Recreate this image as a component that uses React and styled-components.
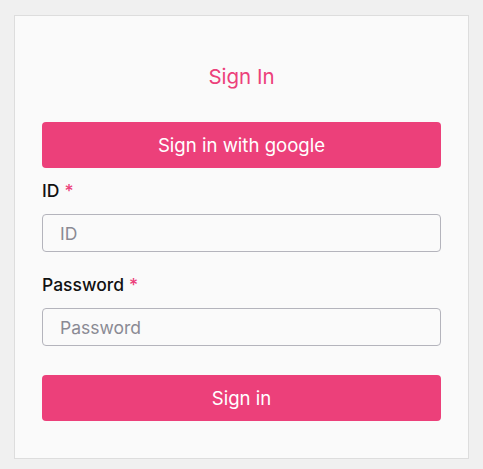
import styled, { createGlobalStyle } from "styled-components";

const GlobalStyle = createGlobalStyle`
  body {
    margin: 0;
    background: #f0f0f0;
    font-family: Inter, "Noto Sans", sans-serif;
  }
`;

const Page = styled.div`
  padding: 15px 14px 10px 14px;
`;

const Card = styled.form`
  box-sizing: border-box;
  width: 455px;
  height: 444px;
  background: #fafafa;
  border: 1px solid #dddddd;
  padding: 46px 27px 0 27px;
  display: flex;
  flex-direction: column;
`;

const Title = styled.h2`
  margin: 0 0 30px 0;
  text-align: center;
  font-size: 20.5px;
  font-weight: 400;
  line-height: 30px;
  color: #ec407a;
`;

const Button = styled.button`
  height: 46px;
  width: 100%;
  border: none;
  border-radius: 4px;
  background: #ec407a;
  color: #ffffff;
  font-family: inherit;
  font-size: 18.6px;
  cursor: pointer;
  margin-top: ${(props) => props.mt || "0"};
`;

const Field = styled.div`
  display: flex;
  flex-direction: column;
  gap: ${(props) => props.gap || "12px"};
  margin-top: ${(props) => props.mt};
`;

const Label = styled.label`
  font-size: 17.5px;
  font-weight: 450;
  line-height: 22px;
  color: #111111;
`;

const Star = styled.span`
  color: #ec407a;
  margin-left: 5px;
`;

const Input = styled.input`
  box-sizing: border-box;
  height: 38px;
  width: 100%;
  border: 1px solid #b4b4bc;
  border-radius: 4px;
  background: #fafafa;
  padding: 0 17px;
  font-family: inherit;
  font-size: 17.5px;
  color: #333;
  outline: none;
  &::placeholder {
    color: #8a8a94;
  }
`;

export default function App() {
  return (
    <Page>
      <GlobalStyle />
      <Card onSubmit={(e) => e.preventDefault()}>
        <Title>Sign In</Title>
        <Button type="button">Sign in with google</Button>
        <Field mt="12px">
          <Label htmlFor="id">
            ID<Star>*</Star>
          </Label>
          <Input id="id" placeholder="ID" />
        </Field>
        <Field mt="22px">
          <Label htmlFor="password">
            Password<Star>*</Star>
          </Label>
          <Input id="password" type="password" placeholder="Password" />
        </Field>
        <Button type="submit" mt="29px">
          Sign in
        </Button>
      </Card>
    </Page>
  );
}
